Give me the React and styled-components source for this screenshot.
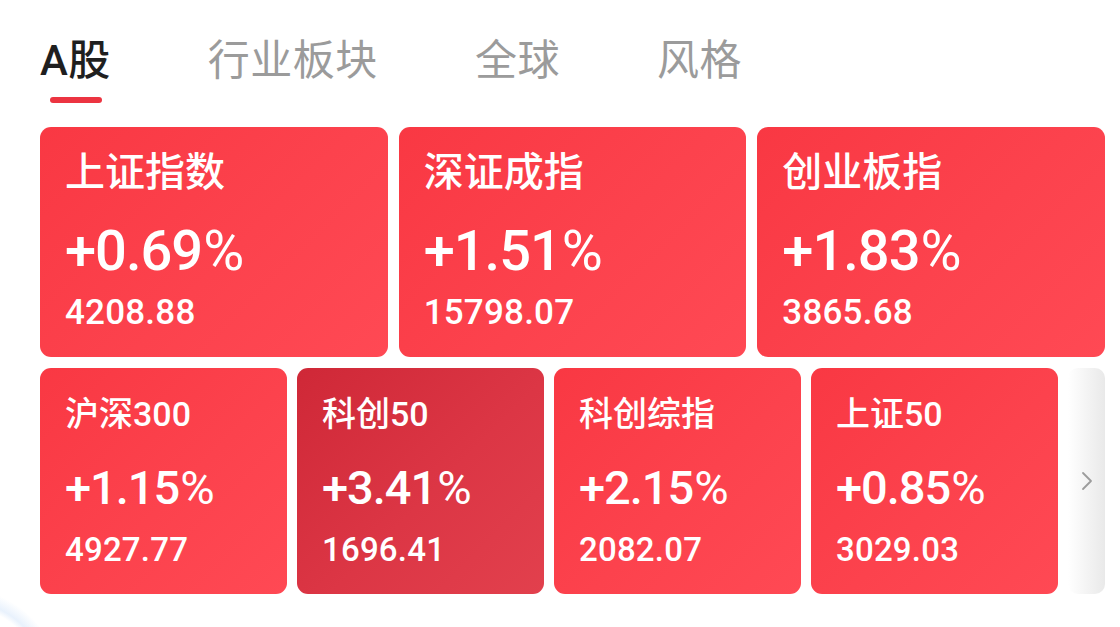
import styled, { createGlobalStyle } from "styled-components";

const GlobalStyle = createGlobalStyle`
  html, body {
    margin: 0;
    padding: 0;
    background: #ffffff;
    font-family: Roboto, "Noto Sans CJK SC", sans-serif;
  }
`;

const Page = styled.div`
  width: 1120px;
  height: 627px;
  box-sizing: border-box;
  padding: 30px 15px 0 40px;
  overflow: hidden;
  background:
    radial-gradient(circle at -40px 690px, transparent 84px, rgba(210, 228, 250, 0.5) 90px, transparent 102px),
    #ffffff;
`;

const Tabs = styled.div`
  display: flex;
  gap: 97px;
  height: 97px;
`;

const Tab = styled.div`
  position: relative;
  height: 62px;
  line-height: 62px;
  font-size: 42px;
  font-weight: ${(p) => (p.$active ? 500 : 400)};
  color: ${(p) => (p.$active ? "#1f1f1f" : "#9b9b9b")};
  letter-spacing: 0.5px;

  &::after {
    content: "";
    display: ${(p) => (p.$active ? "block" : "none")};
    position: absolute;
    left: 50%;
    bottom: -11px;
    width: 52px;
    height: 6px;
    margin-left: -25px;
    border-radius: 3px;
    background: #ec3441;
  }
`;

const Grid = styled.div`
  display: flex;
  flex-direction: column;
  gap: 11px;
`;

const Row = styled.div`
  display: flex;
  gap: ${(p) => p.$gap}px;
  height: ${(p) => p.$height}px;
`;

const Card = styled.div`
  flex: ${(p) => (p.$big ? "1 1 0" : "0 0 247px")};
  box-sizing: border-box;
  padding: ${(p) => (p.$big ? "22px 25px" : "26px 25px")};
  border-radius: 11px;
  color: #ffffff;
  display: flex;
  flex-direction: column;
  background: ${(p) =>
    p.$dark
      ? "linear-gradient(135deg, #cf2837 0%, #dc3645 55%, #e2404d 100%)"
      : "linear-gradient(135deg, #f93843 0%, #fc424d 55%, #ff4954 100%)"};
`;

const Name = styled.div`
  font-size: ${(p) => (p.$big ? 40 : 34)}px;
  line-height: ${(p) => (p.$big ? 48 : 40)}px;
  font-weight: 500;
`;

const Change = styled.div`
  margin-top: ${(p) => (p.$big ? 26 : 30)}px;
  font-size: ${(p) => (p.$big ? 56 : 47)}px;
  line-height: ${(p) => (p.$big ? 56 : 48)}px;
  font-weight: 500;
  letter-spacing: -1px;

  span {
    font-weight: 400;
    margin-left: 1px;
  }
`;

const Price = styled.div`
  margin-top: ${(p) => (p.$big ? 14 : 18)}px;
  font-size: ${(p) => (p.$big ? 35 : 33)}px;
  line-height: 40px;
  font-weight: 500;
  letter-spacing: 0.2px;
`;

const More = styled.div`
  flex: 0 0 37px;
  border-radius: 10px;
  background: linear-gradient(90deg, #ffffff 0%, #f3f3f3 55%, #e9e9e9 100%);
  display: flex;
  align-items: center;
  justify-content: center;
`;

const topIndexes = [
  { name: "上证指数", change: "+0.69", price: "4208.88" },
  { name: "深证成指", change: "+1.51", price: "15798.07" },
  { name: "创业板指", change: "+1.83", price: "3865.68" },
];

const bottomIndexes = [
  { name: "沪深300", change: "+1.15", price: "4927.77" },
  { name: "科创50", change: "+3.41", price: "1696.41", dark: true },
  { name: "科创综指", change: "+2.15", price: "2082.07" },
  { name: "上证50", change: "+0.85", price: "3029.03" },
];

function IndexCard({ item, big }) {
  return (
    <Card $big={big} $dark={item.dark}>
      <Name $big={big}>{item.name}</Name>
      <Change $big={big}>
        {item.change}
        <span>%</span>
      </Change>
      <Price $big={big}>{item.price}</Price>
    </Card>
  );
}

export default function App() {
  return (
    <>
      <GlobalStyle />
      <Page>
        <Tabs>
          <Tab $active>A股</Tab>
          <Tab>行业板块</Tab>
          <Tab>全球</Tab>
          <Tab>风格</Tab>
        </Tabs>
        <Grid>
          <Row $gap={11} $height={230}>
            {topIndexes.map((item) => (
              <IndexCard key={item.name} item={item} big />
            ))}
          </Row>
          <Row $gap={10} $height={226}>
            {bottomIndexes.map((item) => (
              <IndexCard key={item.name} item={item} />
            ))}
            <More>
              <svg width="12" height="20" viewBox="0 0 12 20">
                <polyline
                  points="2,2 10,10 2,18"
                  fill="none"
                  stroke="#9c9c9c"
                  strokeWidth="1.8"
                  strokeLinecap="round"
                  strokeLinejoin="round"
                />
              </svg>
            </More>
          </Row>
        </Grid>
      </Page>
    </>
  );
}
